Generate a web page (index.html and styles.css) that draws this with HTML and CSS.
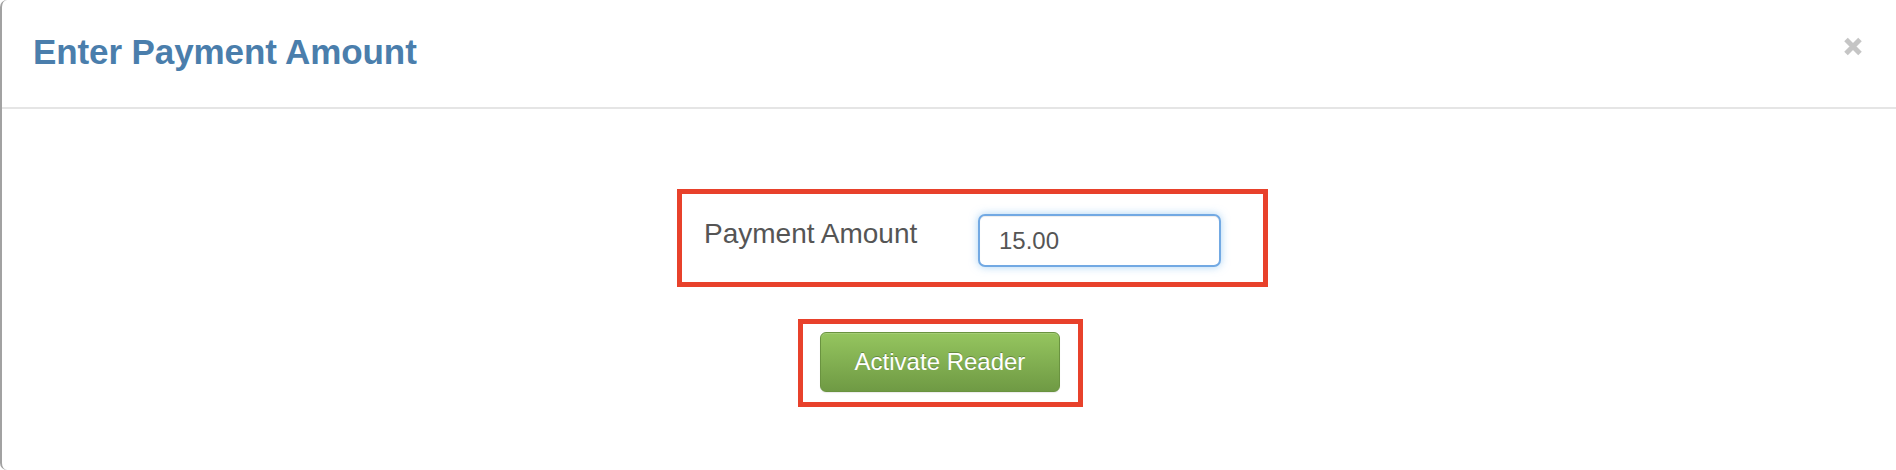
FILE: index.html
```html
<!DOCTYPE html>
<html>
<head>
<meta charset="utf-8">
<link rel="stylesheet" href="styles.css">
</head>
<body>
<div class="modal">
  <div class="modal-header">
    <h4 class="modal-title">Enter Payment Amount</h4>
    <button class="close" type="button" aria-label="Close">
      <svg width="20" height="21" viewBox="0 0 20 21"><path d="M3 3.5 L17 17.5 M17 3.5 L3 17.5" stroke="#c5c5c5" stroke-width="5" stroke-linecap="butt"/></svg>
    </button>
  </div>
  <div class="modal-body">
    <div class="highlight form-box">
      <label class="control-label" for="amt">Payment Amount</label>
      <input id="amt" class="form-control" type="text" value="15.00">
    </div>
    <div class="highlight btn-box">
      <button class="btn-success" type="button">Activate Reader</button>
    </div>
  </div>
</div>
</body>
</html>
```

FILE: styles.css
```css
html, body {
  margin: 0;
  padding: 0;
  background: #ffffff;
}
body {
  font-family: "Liberation Sans", Arial, Helvetica, sans-serif;
  color: #555555;
}
.modal {
  box-sizing: border-box;
  height: 470px;
  border-left: 2px solid #a2a2a2;
  border-radius: 7px 0 0 7px;
  background: #ffffff;
  overflow: hidden;
}
.modal-header {
  box-sizing: border-box;
  height: 109px;
  border-bottom: 2px solid #e5e5e5;
  display: flex;
  justify-content: space-between;
  align-items: flex-start;
  padding: 0 33px 0 31px;
}
.modal-title {
  margin: 32px 0 0 0;
  font-size: 35px;
  line-height: 40px;
  font-weight: bold;
  color: #4a7eac;
  letter-spacing: -0.1px;
}
.close {
  margin-top: 36px;
  padding: 0;
  border: 0;
  background: transparent;
  width: 20px;
  height: 21px;
  display: block;
}
.close svg {
  display: block;
}
.modal-body {
  display: flex;
  flex-direction: column;
  align-items: flex-start;
  padding-top: 80px;
}
.highlight {
  border: 5px solid #e8412b;
  box-sizing: border-box;
}
.form-box {
  margin-left: 675px;
  width: 591px;
  height: 98px;
  display: grid;
  grid-template-columns: 274px 243px;
  align-items: start;
  padding: 20px 0 0 22px;
}
.control-label {
  font-size: 28px;
  line-height: 32px;
  padding-top: 4px;
  color: #555555;
}
.form-control {
  box-sizing: border-box;
  width: 243px;
  height: 53px;
  border: 2px solid #72a9e3;
  border-radius: 7px;
  padding: 0 0 0 19px;
  font-family: "Liberation Sans", Arial, Helvetica, sans-serif;
  font-size: 24px;
  color: #555555;
  outline: none;
  box-shadow: inset 0 1px 1px rgba(0,0,0,0.075), 0 0 9px rgba(102,175,233,0.55);
}
.btn-box {
  margin-left: 796px;
  margin-top: 32px;
  width: 285px;
  height: 88px;
  padding: 8px 0 0 17px;
}
.btn-success {
  box-sizing: border-box;
  display: block;
  width: 240px;
  height: 60px;
  border: 1px solid #6a9340;
  border-radius: 6px;
  background: linear-gradient(to bottom, #95c55f 0%, #6f9a44 100%);
  color: #ffffff;
  font-family: "Liberation Sans", Arial, Helvetica, sans-serif;
  font-size: 24px;
  text-shadow: 0 -1px 0 rgba(0,0,0,0.25);
  box-shadow: inset 0 1px 0 rgba(255,255,255,0.15), 0 1px 1px rgba(0,0,0,0.08);
  padding: 0;
}
```
